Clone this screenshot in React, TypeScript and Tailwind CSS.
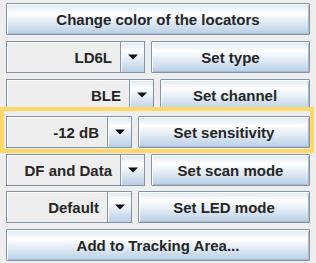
const font = { fontFamily: '"Liberation Sans", Arial, sans-serif' }

function Button({ label, className = '' }: { label: string; className?: string }) {
  return (
    <div
      className={`flex items-center justify-center h-full pt-[2px] border border-[#8093a8] rounded-[1px] bg-[linear-gradient(to_bottom,#dde8f3,#ffffff_30%,#b8cfe5)] shadow-[inset_1px_1px_0_#ffffff,inset_-1px_-1px_0_#a9bccf] text-[15px] font-bold text-[#262626] ${className}`}
    >
      {label}
    </div>
  )
}

function Combo({ value, width }: { value: string; width: string }) {
  return (
    <div className={`flex h-full border border-[#8093a8] ${width}`}>
      <div className="flex-1 flex items-center justify-end pt-[2px] pr-[8px] bg-[#eeeeee] shadow-[inset_1px_1px_0_#ffffff] text-[15px] font-bold text-[#262626]">
        {value}
      </div>
      <div className="w-[24px] flex items-center justify-center border-l border-[#8093a8] bg-[linear-gradient(to_bottom,#dde8f3,#ffffff_30%,#b8cfe5)] shadow-[inset_1px_1px_0_#ffffff]">
        <svg width="10" height="6" viewBox="0 0 10 6">
          <path d="M0 0.5H10L5 5.5Z" fill="#111" />
        </svg>
      </div>
    </div>
  )
}

export default function App() {
  const rows = [
    { value: 'LD6L', action: 'Set type', width: 'w-[139px]', mt: 'mt-[6px]' },
    { value: 'BLE', action: 'Set channel', width: 'w-[148px]', mt: 'mt-[6px]' },
    { value: '-12 dB', action: 'Set sensitivity', width: 'w-[126px]', mt: 'mt-[5px]' },
    { value: 'DF and Data', action: 'Set scan mode', width: 'w-[139px]', mt: 'mt-[6px]' },
    { value: 'Default', action: 'Set LED mode', width: 'w-[126px]', mt: 'mt-[5px]' },
  ]

  return (
    <div className="relative w-[316px] h-[263px] bg-[#eeeeee] overflow-hidden" style={font}>
      <div className="flex flex-col px-[6px] pt-[3px]">
        <div className="h-[32px]">
          <Button label="Change color of the locators" />
        </div>
        {rows.map((r) => (
          <div key={r.action} className={`flex gap-[6px] h-[32px] ${r.mt}`}>
            <Combo value={r.value} width={r.width} />
            <div className="flex-1 h-full">
              <Button label={r.action} />
            </div>
          </div>
        ))}
        <div className="h-[32px] mt-[6px]">
          <Button label="Add to Tracking Area..." />
        </div>
      </div>
      <div className="absolute left-0 top-[107px] w-[314px] h-[46px] border-[4px] border-[#fdd867]" />
    </div>
  )
}
